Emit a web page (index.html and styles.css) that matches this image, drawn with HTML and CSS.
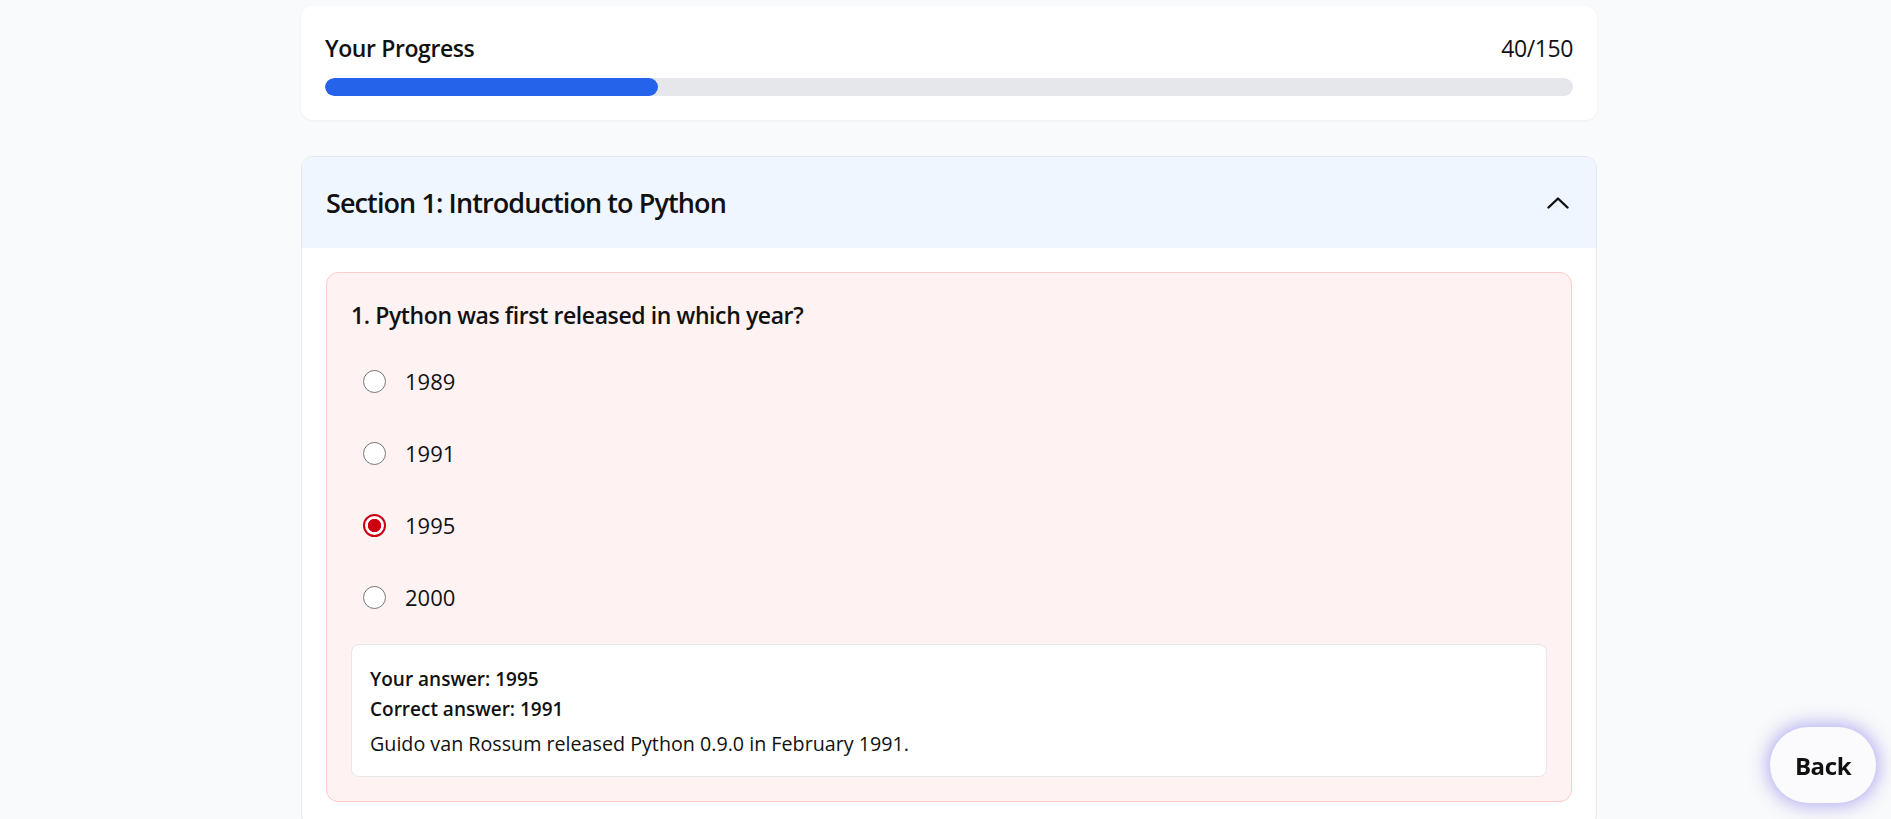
FILE: index.html
```html
<!DOCTYPE html>
<html lang="en">
<head>
<meta charset="utf-8">
<title>Quiz Results</title>
<link rel="stylesheet" href="styles.css">
</head>
<body>
<main class="page">
  <section class="progress-card">
    <div class="progress-head">
      <span class="progress-title">Your Progress</span>
      <span class="progress-count">40/150</span>
    </div>
    <div class="progress-track"><div class="progress-fill" style="width: 26.67%"></div></div>
  </section>

  <section class="section-card">
    <header class="section-head">
      <h2 class="section-title">Section 1: Introduction to Python</h2>
      <svg class="chevron" width="22" height="12" viewBox="0 0 22 12" aria-hidden="true">
        <polyline points="1.5,10.5 11,1.5 20.5,10.5" fill="none" stroke="#111" stroke-width="2.4" stroke-linecap="round" stroke-linejoin="round"/>
      </svg>
    </header>
    <div class="section-body">
      <article class="question wrong">
        <h3 class="question-title">1. Python was first released in which year?</h3>
        <div class="options">
          <label class="option"><input type="radio" name="q1" disabled><span>1989</span></label>
          <label class="option"><input type="radio" name="q1" disabled><span>1991</span></label>
          <label class="option"><input type="radio" name="q1" checked disabled><span>1995</span></label>
          <label class="option"><input type="radio" name="q1" disabled><span>2000</span></label>
        </div>
        <div class="feedback">
          <p class="fb-strong">Your answer: 1995</p>
          <p class="fb-strong">Correct answer: 1991</p>
          <p class="fb-note">Guido van Rossum released Python 0.9.0 in February 1991.</p>
        </div>
      </article>
    </div>
  </section>
</main>
<button class="back-btn" type="button">Back</button>
</body>
</html>
```

FILE: styles.css
```css
* { box-sizing: border-box; }

html, body {
  margin: 0;
  background: #f9fafb;
  color: #111;
  font-family: "Open Sans", "Noto Sans", "Liberation Sans", sans-serif;
}

body {
  padding: 6px 0 0 7px;
  overflow: hidden;
  height: 819px;
}

.page {
  width: 1296px;
  margin: 0 auto;
}

.progress-card {
  background: #fff;
  border-radius: 12px;
  padding: 24px;
  box-shadow: 0 1px 3px rgba(0, 0, 0, 0.05);
}

.progress-head {
  display: flex;
  justify-content: space-between;
  align-items: center;
  font-size: 23px;
  line-height: 36px;
  letter-spacing: -0.4px;
}

.progress-title { font-weight: 600; }
.progress-count { font-weight: 400; }

.progress-track {
  margin-top: 12px;
  height: 18px;
  background: #e5e7eb;
  border-radius: 9px;
  overflow: hidden;
}

.progress-fill {
  height: 100%;
  background: #2563eb;
  border-radius: 9px;
}

.section-card {
  margin-top: 36px;
  background: #fff;
  border: 1px solid #e5e7eb;
  border-radius: 12px;
  overflow: hidden;
}

.section-head {
  display: flex;
  align-items: center;
  justify-content: space-between;
  background: #eff6ff;
  padding: 24px 27px 24px 24px;
}

.section-title {
  margin: 0;
  font-size: 27px;
  line-height: 43px;
  font-weight: 600;
  letter-spacing: -0.9px;
}

.chevron { display: block; }

.section-body {
  padding: 24px;
}

.question {
  border-radius: 12px;
  padding: 24px;
}

.question.wrong {
  background: #fef2f2;
  border: 1px solid #fecaca;
}

.question-title {
  margin: 0;
  font-size: 23px;
  line-height: 36px;
  font-weight: 600;
  letter-spacing: -0.4px;
}

.options {
  margin-top: 18px;
  display: flex;
  flex-direction: column;
  gap: 12px;
}

.option {
  height: 60px;
  display: flex;
  align-items: center;
  gap: 19px;
  padding: 0 12px;
  font-size: 22px;
  letter-spacing: 0;
}

.option input {
  appearance: none;
  -webkit-appearance: none;
  margin: 0;
  width: 23px;
  height: 23px;
  border-radius: 50%;
  border: 1.5px solid #767676;
  background: #fff;
  flex: none;
}

.option input:checked {
  border: 2px solid #cc0011;
  background: radial-gradient(circle, #cc0011 0 6.3px, #fff 7px);
}

.feedback {
  margin-top: 17px;
  background: #fff;
  border: 1px solid #e5e7eb;
  border-radius: 8px;
  padding: 19px 18px 17px;
}

.feedback p {
  margin: 0;
  font-size: 19px;
  line-height: 30px;
  letter-spacing: 0;
}

.fb-strong { font-weight: 600; }

.fb-note {
  margin-top: 5px !important;
  font-size: 19.7px !important;
}

.back-btn {
  position: fixed;
  right: 15px;
  bottom: 16px;
  width: 106px;
  height: 76px;
  border: none;
  border-radius: 38px;
  background: #fbfbfd;
  color: #111;
  font-family: "Open Sans", "Noto Sans", sans-serif;
  font-size: 24px;
  font-weight: 700;
  letter-spacing: -0.4px;
  box-shadow: 0 0 18px 3px rgba(110, 100, 230, 0.5);
  cursor: pointer;
}
```
